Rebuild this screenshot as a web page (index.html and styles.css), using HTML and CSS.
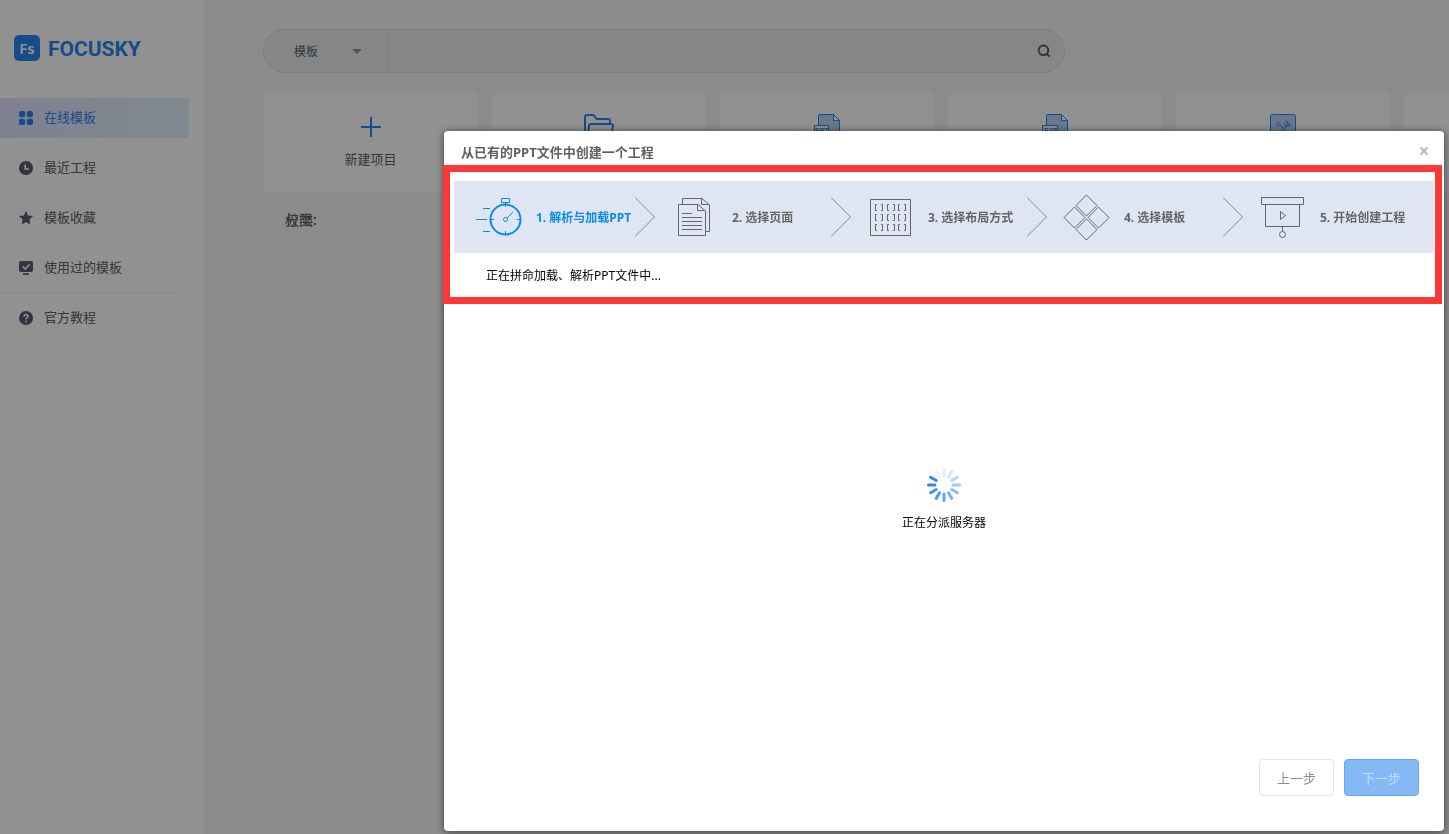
FILE: index.html
```
<!DOCTYPE html>
<html lang="zh-CN">
<head>
<meta charset="utf-8">
<title>Focusky</title>
<link rel="stylesheet" href="styles.css">
</head>
<body>
<div class="app">
  <aside class="sidebar">
    <div class="brand"><span class="brand-mark">Fs</span><span class="brand-name">FOCUSKY</span></div>
    <nav class="menu">
      <a class="menu-item active" href="#">
        <svg class="menu-icon" viewBox="0 0 14 14"><rect width="6.2" height="6.2" rx="1.8"/><rect x="7.8" width="6.2" height="6.2" rx="1.8"/><rect y="7.8" width="6.2" height="6.2" rx="1.8"/><rect x="7.8" y="7.8" width="6.2" height="6.2" rx="1.8"/></svg>
        在线模板</a>
      <a class="menu-item" href="#">
        <svg class="menu-icon" viewBox="0 0 14 14"><circle cx="7" cy="7" r="7"/><path class="cut" d="M6.2 3.5V8h3.8"/></svg>
        最近工程</a>
      <a class="menu-item" href="#">
        <svg class="menu-icon" viewBox="0 0 14 14"><path d="M7 0l2.1 4.5 4.9.6-3.6 3.4.9 5L7 11.100l-4.300 2.400.9-5L0 5.100l4.900-.6z"/></svg>
        模板收藏</a>
      <a class="menu-item" href="#">
        <svg class="menu-icon" viewBox="0 0 14 14"><rect width="14" height="11" rx="2"/><rect x="4" y="12.200" width="6" height="1.800" rx=".6"/><path class="cut" d="M3.500 5.500l2.700 2.500L10.500 3.500"/></svg>
        使用过的模板</a>
      <hr class="menu-rule">
      <a class="menu-item" href="#">
        <svg class="menu-icon" viewBox="0 0 14 14"><circle cx="7" cy="7" r="7"/><path class="cut" d="M5 5.400C5 2.800 9.200 3 9 5.400 8.900 6.700 7 6.700 7 8.400M7 9.800v1.400"/></svg>
        官方教程</a>
    </nav>
  </aside>
  <main class="content">
    <form class="search">
      <label class="type"><select class="type-select" aria-label="类型"><option>模板</option></select></label>
      <input class="search-input" type="text" aria-label="搜索">
      <button class="search-button" type="button" aria-label="搜索"><svg width="14" height="14" viewBox="0 0 14 14"><path d="M6.500 1.500a4.800 4.800 0 1 0 0 9.600a4.800 4.800 0 0 0 0-9.600M9.600 9.600l3 3"/></svg></button>
    </form>
    <div class="cards">
      <button class="card" type="button">
        <svg class="card-icon" viewBox="0 0 30 30"><path class="plus" d="M5 14h20M15 4v20"/></svg>
        <span>新建项目</span></button>
      <button class="card" type="button" aria-label="打开项目">
        <svg class="card-icon" viewBox="0 0 30 30"><path class="thick" d="M1 19V4q0-2 2-2h6q1 0 2 2l2 2h11q2 0 2 2v3M4 22l1-9q0-2 2-2h20q2 0 2 2l-2 9z"/></svg></button>
      <button class="card" type="button" aria-label="导入PPT">
        <svg class="card-icon" viewBox="0 0 30 30"><path class="sheet" d="M6.500 12V3q0-1.500 1.500-1.500H21.500L27.500 8v18h-21z"/><path class="fold" d="M21.500 1.500V7.500H27.500z"/><path class="tag" d="M2.500 12.500h14v8h-14z"/><text class="tag-text" x="3" y="20">PPT</text></svg></button>
      <button class="card" type="button" aria-label="导入EXE">
        <svg class="card-icon" viewBox="0 0 30 30"><path class="sheet" d="M6.500 12V3q0-1.500 1.500-1.500H21.500L27.500 8v18h-21z"/><path class="fold" d="M21.500 1.500V7.500H27.500z"/><path class="tag" d="M2.500 12.500h15v8h-15z"/><text class="tag-text" x="4" y="20">EXE</text></svg></button>
      <button class="card" type="button" aria-label="工具">
        <svg class="card-icon" viewBox="0 0 30 30"><rect class="sheet" x="2.500" y="1.500" width="25" height="24" rx="2"/><path d="M12 12l8 8M20 11l-9 9M10 9.500a1.800 1.800 0 1 0 .1 0M20 8.500c-3-1-5 2-3 4l2 1c2 0 3-1 3-3l-2 1-1-1z"/></svg></button>
      <button class="card" type="button" aria-label="更多"></button>
    </div>
    <div class="filters"><span>分类:</span><span>权限:</span></div>
  </main>
</div>

<div class="backdrop">
  <section class="dialog" role="dialog" aria-labelledby="dialog-title">
    <header class="dialog-head">
      <h1 class="dialog-title" id="dialog-title">从已有的PPT文件中创建一个工程</h1>
      <button class="close" type="button" aria-label="关闭"><svg width="10" height="10" viewBox="0 0 10 10"><path d="M1.500 1.500l7 7M8.500 1.500l-7 7"/></svg></button>
    </header>
    <div class="progress">
      <ol class="steps">
        <li class="step current">
          <svg class="step-icon" viewBox="0 0 46 46"><g class="bold"><circle cx="29.500" cy="25.500" r="15"/></g><path d="M25.500 4.500h8v4h-8zM29.500 9v4M15 25.500h3M41 25.500h3M29.500 37v3.500M31 24l6-6M7 14.500h7M0 25.500h11M7 37.500h7"/><circle cx="29.500" cy="25.500" r="2"/></svg>
          <span class="step-label">1. 解析与加载PPT</span>
          <svg class="chevron" viewBox="0 0 20 40"><path d="M0 .5L19.500 20 0 39.500"/></svg>
        </li>
        <li class="step">
          <svg class="step-icon" viewBox="0 0 46 46"><path d="M10.500 10.500V4.500H30L37.500 11V37.500H34M29.500 4.500V10.500H37M6.500 10.500H26L33.500 17V41.500H6.500zM25.500 10.500V16.500H33M10 19.500h10M10 23.500h20M10 27.500h20M10 31.500h20M10 35.500h20"/></svg>
          <span class="step-label">2. 选择页面</span>
          <svg class="chevron" viewBox="0 0 20 40"><path d="M0 .5L19.500 20 0 39.500"/></svg>
        </li>
        <li class="step">
          <svg class="step-icon" viewBox="0 0 46 46"><path d="M2.500 5.500h40v36h-40zM9 10.500H7.500v6H9M13 10.500h1.500v6H13M21 10.500h-1.500v6H21M25 10.500h1.500v6H25M32 10.500h-1.500v6H32M36 10.500h1.500v6H36M9 20.500H7.500v6H9M13 20.500h1.500v6H13M21 20.500h-1.500v6H21M25 20.500h1.500v6H25M32 20.500h-1.500v6H32M36 20.500h1.500v6H36M9 30.500H7.500v6H9M13 30.500h1.500v6H13M21 30.500h-1.500v6H21M25 30.500h1.500v6H25M32 30.500h-1.500v6H32M36 30.500h1.500v6H36"/></svg>
          <span class="step-label">3. 选择布局方式</span>
          <svg class="chevron" viewBox="0 0 20 40"><path d="M0 .5L19.500 20 0 39.500"/></svg>
        </li>
        <li class="step">
          <svg class="step-icon" viewBox="0 0 46 46"><path d="M22.500 1l10.500 10.500-10.500 10.500L12 11.500zM22.500 25L33 35.500 22.500 46 12 35.500zM10.500 13L21 23.500 10.500 34 0 23.500zM34.500 13L45 23.500 34.500 34 24 23.500z"/></svg>
          <span class="step-label">4. 选择模板</span>
          <svg class="chevron" viewBox="0 0 20 40"><path d="M0 .5L19.500 20 0 39.500"/></svg>
        </li>
        <li class="step">
          <svg class="step-icon" viewBox="0 0 46 46"><path d="M1.500 3.500h42v7h-42zM5.500 10.500v22h34v-22M20.500 17.500v8l5-4zM22.500 33v4"/><circle cx="22.500" cy="40.500" r="3"/></svg>
          <span class="step-label">5. 开始创建工程</span>
        </li>
      </ol>
      <p class="status">正在拼命加载、解析PPT文件中...</p>
    </div>
    <div class="loading">
      <svg class="spinner" width="36" height="36" viewBox="-18 -18 36 36">
        <path d="M0-9V-15.500" opacity=".15"/>
        <path d="M0-9V-15.500" transform="rotate(30)" opacity=".2"/>
        <path d="M0-9V-15.500" transform="rotate(60)" opacity=".35"/>
        <path d="M0-9V-15.500" transform="rotate(90)" opacity=".45"/>
        <path d="M0-9V-15.500" transform="rotate(120)" opacity=".55"/>
        <path d="M0-9V-15.500" transform="rotate(150)" opacity=".65"/>
        <path d="M0-9V-15.500" transform="rotate(180)" opacity=".75"/>
        <path d="M0-9V-15.500" transform="rotate(210)" opacity=".85"/>
        <path d="M0-9V-15.500" transform="rotate(240)" opacity=".9"/>
        <path d="M0-9V-15.500" transform="rotate(270)"/>
        <path d="M0-9V-15.500" transform="rotate(300)"/>
        <path d="M0-9V-15.500" transform="rotate(330)" opacity=".08"/>
      </svg>
      <p class="loading-text">正在分派服务器</p>
    </div>
    <footer class="actions">
      <button class="button" type="button">上一步</button>
      <button class="button primary" type="button">下一步</button>
    </footer>
  </section>
</div>
</body>
</html>
```
FILE: styles.css
```
* { box-sizing: border-box; }
body {
  margin: 0;
  overflow: hidden;
  font: 13px/20px "Noto Sans", "Noto Sans CJK SC", sans-serif;
  color: #606060;
}
button, input, select { font: inherit; color: inherit; }
svg { fill: none; stroke: currentColor; flex: none; }

.app { display: flex; min-height: 100vh; background: #f6f6f6; }
.sidebar {
  flex: none;
  width: 204px;
  padding-top: 35px;
  background: #fff;
}
.brand { display: flex; align-items: center; gap: 8px; height: 26px; padding-left: 14px; color: #2787ee; }
.brand-mark {
  width: 26px;
  border-radius: 5px;
  background: #2787ee;
  color: #fff;
  font: 600 15px/26px "Noto Sans", sans-serif;
  text-align: center;
}
.brand-name { padding-top: 2px; font: bold 21px/26px Roboto, sans-serif; }
.menu { display: flex; flex-direction: column; gap: 10px; margin-top: 37px; }
.menu-item {
  display: flex;
  align-items: center;
  gap: 11px;
  height: 40px;
  margin-right: 15px;
  padding: 0 0 2px 19px;
  color: #606060;
  text-decoration: none;
}
.menu-item.active { border-radius: 0 3px 3px 0; background: linear-gradient(90deg, #dfe2fd, #e2f2fc); color: #2787ee; }
.menu-icon { width: 14px; height: 14px; margin-top: 2px; fill: #585e70; stroke: none; }
.active .menu-icon { fill: #2787ee; }
.cut { fill: none; stroke: #fff; stroke-width: 1.6; }
.menu-rule { width: 180px; height: 1px; margin: -6px 0 -5px; border: 0; background: #eee; }

.content { flex: 1; min-width: 0; padding: 29px 0 0 59px; overflow: hidden; }
.search {
  display: flex;
  width: 802px;
  height: 44px;
  border: 1px solid #dfe0e3;
  border-radius: 22px;
  background: #e9ebef;
  overflow: hidden;
}
.type { position: relative; width: 125px; border-right: 1px solid #e0e2e6; font-size: 12px; }
.type::after {
  content: "";
  position: absolute;
  top: 19px;
  right: 26px;
  border: 5px solid transparent;
  border-top-color: #93938f;
  border-bottom: 0;
}
.type-select { width: 100%; height: 100%; padding: 2px 30px 0; border: 0; background: none; appearance: none; }
.search-input { flex: 1; border: 0; background: none; }
.search-button { display: flex; align-items: center; justify-content: center; width: 40px; padding: 0; border: 0; background: none; }
.search-button svg { stroke-width: 2; }
.cards { display: grid; grid-template-columns: repeat(6, 213px); gap: 15px; margin: 20px 0 0 1px; }
.card {
  display: flex;
  flex-direction: column;
  align-items: center;
  gap: 6px;
  height: 100px;
  padding: 20px 0 0;
  border: 0;
  border-radius: 4px;
  background: #fff;
}
.card-icon { width: 30px; height: 30px; color: #2787ee; }
.plus, .thick { stroke-width: 2; }
.sheet { fill: #b9d4f3; }
.fold, .tag { fill: #fff; }
.tag-text { fill: #2787ee; stroke: none; font: bold 7px "Liberation Sans", sans-serif; }
.filters { display: grid; justify-content: start; margin: 17px 0 0 22px; }
.filters span { grid-area: 1 / 1; font-size: 14px; font-weight: normal; }

.backdrop { position: fixed; inset: 0; display: flex; padding: 131px 5px 3px 444px; background: rgba(0, 0, 0, .43); }
.dialog {
  display: flex;
  flex: 1;
  flex-direction: column;
  min-width: 0;
  border-radius: 4px;
  background: #fff;
  box-shadow: 0 1px 8px rgba(0, 0, 0, .6);
}
.dialog-head { display: flex; align-items: center; justify-content: space-between; height: 34px; padding: 6px 15px 0 17px; }
.dialog-title { margin: 0; padding-top: 2px; font-size: 13px; line-height: 20px; color: #606060; }
.close { display: flex; padding: 0; border: 0; background: none; color: #bbb; }
.close svg { stroke-width: 2.4; }
.progress { margin: 0 2px 0 -1px; padding: 9px 1px 0 4px; border: 7px solid #fd3636; }
.steps { display: grid; grid-template-columns: repeat(5, 1fr); height: 72px; margin: 0; padding: 0; background: #dfe5f3; list-style: none; }
.step { display: flex; align-items: center; min-width: 0; padding-left: 22px; color: #666; }
.step.current { color: #0c8ae8; }
.step-icon { width: 46px; height: 46px; overflow: visible; }
.bold { stroke-width: 2; }
.step-label { flex: 1; margin-left: 14px; padding-top: 2px; font-size: 12px; font-weight: bold; white-space: nowrap; }
.chevron { width: 20px; height: 40px; margin-right: -5px; color: #8a8a8a; }
.status { margin: 13px 0 11px; padding-left: 32px; font-size: 12px; color: #000; }
.loading { display: flex; flex: 1; flex-direction: column; align-items: center; justify-content: center; gap: 10px; padding-bottom: 64px; }
.spinner { color: #2f86f6; stroke-width: 3; stroke-linecap: round; }
.loading-text { margin: 0; font-size: 12px; color: #000; }
.actions { display: flex; justify-content: flex-end; gap: 10px; padding: 0 25px 35px; }
.button { width: 75px; height: 37px; padding: 0; border: 1px solid #e4e4e4; border-radius: 4px; background: #fff; color: #8c8c8c; }
.button.primary { border-color: #62a8f5; background: #84b9f5; color: #c4defb; }
```
